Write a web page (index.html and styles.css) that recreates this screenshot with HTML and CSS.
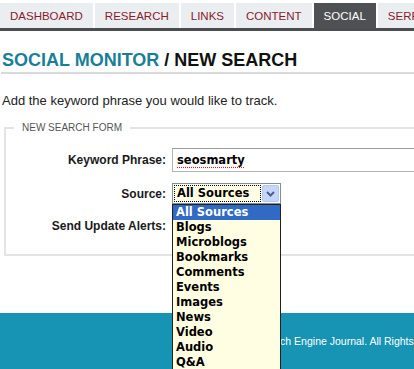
FILE: index.html
```html
<!DOCTYPE html>
<html>
<head>
<meta charset="utf-8">
<link rel="stylesheet" href="styles.css">
</head>
<body>
<div class="page">
  <nav class="tabs">
    <a class="tab">DASHBOARD</a>
    <a class="tab">RESEARCH</a>
    <a class="tab">LINKS</a>
    <a class="tab">CONTENT</a>
    <a class="tab tab-active">SOCIAL</a>
    <a class="tab">SERP</a>
  </nav>
  <main class="content">
    <h1 class="title"><span class="title-accent">SOCIAL MONITOR</span> / NEW SEARCH</h1>
    <p class="intro">Add the keyword phrase you would like to track.</p>
    <fieldset class="form-box">
      <legend class="form-legend">NEW SEARCH FORM</legend>
      <div class="form-grid">
        <label class="label">Keyword Phrase:</label>
        <div class="control">
          <div class="text-input"><span class="typed">seosmarty</span></div>
        </div>
        <label class="label">Source:</label>
        <div class="control">
          <div class="select">
            <div class="select-box">
              <span class="select-value">All Sources</span>
              <span class="select-btn">
                <svg width="9" height="6" viewBox="0 0 9 6"><path d="M1 1 L4.5 4.5 L8 1" fill="none" stroke="#4d6185" stroke-width="2"/></svg>
              </span>
            </div>
            <ul class="select-list">
              <li class="option option-active">All Sources</li>
              <li class="option">Blogs</li>
              <li class="option">Microblogs</li>
              <li class="option">Bookmarks</li>
              <li class="option">Comments</li>
              <li class="option">Events</li>
              <li class="option">Images</li>
              <li class="option">News</li>
              <li class="option">Video</li>
              <li class="option">Audio</li>
              <li class="option">Q&amp;A</li>
            </ul>
          </div>
        </div>
        <label class="label">Send Update Alerts:</label>
        <div class="control">
          <span class="checkbox"></span>
        </div>
      </div>
    </fieldset>
  </main>
  <footer class="footer">© 2010 Search Engine Journal. All Rights Reserved.</footer>
</div>
</body>
</html>
```

FILE: styles.css
```css
html, body {
  margin: 0;
  padding: 0;
  overflow: hidden;
  background: #fff;
}
.page {
  width: 414px;
  overflow: hidden;
  font-family: "Liberation Sans", Arial, sans-serif;
}
.tabs {
  display: flex;
  flex-wrap: nowrap;
  gap: 2px;
  padding-top: 3px;
  border-bottom: 3px solid #4b4e51;
  white-space: nowrap;
}
.tab {
  flex: none;
  height: 25px;
  line-height: 26px;
  padding: 0 10px;
  background: #eaeef0;
  color: #8a1b2d;
  font-size: 11.5px;
}
.tab-active {
  background: #4e5154;
  color: #fff;
}
.content {
  padding-left: 1px;
}
.title {
  margin: 19px 0 0 0;
  padding: 0 0 1px 1px;
  font-size: 18px;
  line-height: 21px;
  font-weight: bold;
  color: #111;
  border-bottom: 2px solid #d9d9d9;
  white-space: nowrap;
}
.title-accent {
  color: #1a7f96;
}
.intro {
  margin: 19px 0 0 0;
  padding-left: 1px;
  font-size: 13px;
  line-height: 16px;
  color: #222;
}
.form-box {
  margin: 13px 0 0 3px;
  width: 450px;
  padding: 0 0 18px 0;
  border: 2px solid #e4e4e4;
  box-sizing: border-box;
}
.form-legend {
  margin-left: 8px;
  padding: 0 8px;
  font-size: 10px;
  line-height: 12px;
  color: #555;
}
.form-grid {
  display: grid;
  grid-template-columns: 160px 1fr;
  grid-template-rows: 24px 21px 21px;
  column-gap: 6px;
  row-gap: 11px;
  padding-top: 14px;
  align-items: center;
}
.label {
  text-align: right;
  font-size: 12px;
  font-weight: bold;
  color: #1a1a1a;
  white-space: nowrap;
}
.control {
  display: flex;
  align-items: center;
  height: 100%;
}
.text-input {
  box-sizing: border-box;
  width: 300px;
  height: 24px;
  border: 1px solid #b4b4b4;
  border-top-color: #9a9a9a;
  display: flex;
  align-items: center;
  padding-left: 4px;
  background: #fff;
}
.typed {
  font-family: "DejaVu Sans", Verdana, sans-serif;
  font-weight: bold;
  font-size: 11.5px;
  color: #000;
  text-decoration: underline dotted #e02020;
  text-underline-offset: 3px;
}
.select {
  position: relative;
  width: 109px;
  height: 21px;
}
.select-box {
  box-sizing: border-box;
  width: 109px;
  height: 21px;
  border: 1px solid #7f8d9e;
  background: #fffde3;
  display: flex;
  align-items: center;
  padding: 1px;
  gap: 1px;
}
.select-value {
  box-sizing: border-box;
  width: 88px;
  height: 17px;
  border: 1px dotted #000;
  line-height: 15px;
  padding-left: 2px;
  font-family: "DejaVu Sans", Verdana, sans-serif;
  font-weight: bold;
  font-size: 11.5px;
  color: #000;
  white-space: nowrap;
}
.select-btn {
  box-sizing: border-box;
  width: 17px;
  height: 17px;
  background: #c6d5fb;
  border: 1px solid #b5c6ee;
  border-radius: 2px;
  display: flex;
  align-items: center;
  justify-content: center;
}
.select-list {
  position: absolute;
  top: 100%;
  left: 0;
  z-index: 10;
  box-sizing: border-box;
  width: 109px;
  margin: 0;
  padding: 0;
  list-style: none;
  border: 1px solid #222;
  background: #fffee2;
}
.option {
  height: 15px;
  line-height: 15px;
  padding-left: 3px;
  font-family: "DejaVu Sans", Verdana, sans-serif;
  font-weight: bold;
  font-size: 11.5px;
  color: #000;
  white-space: nowrap;
}
.option-active {
  background: #316ac5;
  color: #fff;
}
.checkbox {
  display: block;
  width: 13px;
  height: 13px;
  border: 1px solid #1c5180;
  box-sizing: border-box;
  background: #fff;
}
.footer {
  margin-top: 57px;
  height: 56px;
  box-sizing: border-box;
  padding: 21px 0 0 221px;
  background: #1794b4;
  color: #fff;
  font-size: 10.5px;
  line-height: 14px;
  white-space: nowrap;
}
```
